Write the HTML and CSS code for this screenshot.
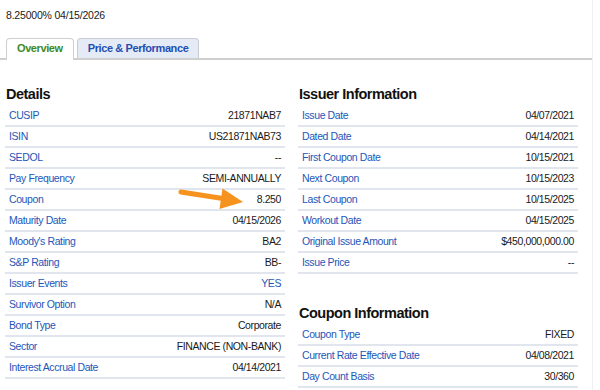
FILE: index.html
```html
<!DOCTYPE html>
<html lang="en">
  <head>
    <meta charset="UTF-8" />
    <title>8.25000% 04/15/2026</title>
    <link rel="stylesheet" href="styles.css">
  </head>
  <body>
    <div class="page">
      <h1 class="title">8.25000% 04/15/2026</h1>

      <div class="tabs">
        <div class="tab tab-active">Overview</div>
        <div class="tab">Price &amp; Performance</div>
      </div>

      <div class="content">
        <section class="col">
          <h2 class="heading">Details</h2>
          <div class="row"><span class="label">CUSIP</span><span class="value">21871NAB7</span></div>
          <div class="row"><span class="label">ISIN</span><span class="value">US21871NAB73</span></div>
          <div class="row"><span class="label">SEDOL</span><span class="value">--</span></div>
          <div class="row"><span class="label">Pay Frequency</span><span class="value">SEMI-ANNUALLY</span></div>
          <div class="row"><span class="label">Coupon</span><span class="value">8.250</span></div>
          <div class="row"><span class="label">Maturity Date</span><span class="value">04/15/2026</span></div>
          <div class="row"><span class="label">Moody's Rating</span><span class="value">BA2</span></div>
          <div class="row"><span class="label">S&amp;P Rating</span><span class="value">BB-</span></div>
          <div class="row"><span class="label">Issuer Events</span><span class="value link">YES</span></div>
          <div class="row"><span class="label">Survivor Option</span><span class="value">N/A</span></div>
          <div class="row"><span class="label">Bond Type</span><span class="value">Corporate</span></div>
          <div class="row"><span class="label">Sector</span><span class="value">FINANCE (NON-BANK)</span></div>
          <div class="row"><span class="label">Interest Accrual Date</span><span class="value">04/14/2021</span></div>
        </section>

        <section class="col">
          <h2 class="heading">Issuer Information</h2>
          <div class="row"><span class="label">Issue Date</span><span class="value">04/07/2021</span></div>
          <div class="row"><span class="label">Dated Date</span><span class="value">04/14/2021</span></div>
          <div class="row"><span class="label">First Coupon Date</span><span class="value">10/15/2021</span></div>
          <div class="row"><span class="label">Next Coupon</span><span class="value">10/15/2023</span></div>
          <div class="row"><span class="label">Last Coupon</span><span class="value">10/15/2025</span></div>
          <div class="row"><span class="label">Workout Date</span><span class="value">04/15/2025</span></div>
          <div class="row"><span class="label">Original Issue Amount</span><span class="value">$450,000,000.00</span></div>
          <div class="row"><span class="label">Issue Price</span><span class="value">--</span></div>

          <h2 class="heading heading-gap">Coupon Information</h2>
          <div class="row"><span class="label">Coupon Type</span><span class="value">FIXED</span></div>
          <div class="row"><span class="label">Current Rate Effective Date</span><span class="value">04/08/2021</span></div>
          <div class="row"><span class="label">Day Count Basis</span><span class="value">30/360</span></div>
        </section>
      </div>

      <svg class="arrow" width="600" height="390" viewBox="0 0 600 390">
        <line x1="181" y1="192" x2="226" y2="199" stroke="#f6921e" stroke-width="5" stroke-linecap="round" />
        <polygon points="222.5,188.5 243,202 219.5,209" fill="#f6921e" />
      </svg>
    </div>
  </body>
</html>
```

FILE: styles.css
```css
* {
  margin: 0;
  padding: 0;
  box-sizing: border-box;
}

body {
  background-color: #ffffff;
  font-family: "Liberation Sans", Arial, Helvetica, sans-serif;
  color: #1a1a1a;
}

.page {
  position: relative;
  width: 593px;
  height: 390px;
  padding-left: 5px;
  border-right: 1px solid #f0f0f0;
}

.title {
  font-size: 10.5px;
  font-weight: normal;
  letter-spacing: -0.2px;
  line-height: 14px;
  padding: 8px 0 0 1px;
  color: #1a1a1a;
}

.tabs {
  display: flex;
  align-items: flex-end;
  gap: 3px;
  margin-top: 16px;
  margin-left: -5px;
  padding-left: 6px;
  border-bottom: 2px solid #cfcfcf;
  height: 22px;
}

.tab {
  height: 20px;
  padding: 0 10px;
  border: 1px solid #c9cdd3;
  border-bottom: none;
  border-radius: 4px 4px 0 0;
  background-color: #e5ebf6;
  color: #1f4fb2;
  font-size: 11px;
  font-weight: bold;
  letter-spacing: -0.4px;
  line-height: 19px;
}

.tab-active {
  height: 22px;
  margin-bottom: -2px;
  background-color: #ffffff;
  color: #3d8a1f;
  border-color: #cfcfcf;
}

.content {
  display: grid;
  grid-template-columns: 280px 280px;
  gap: 13px;
  padding-top: 24px;
}

.heading {
  font-size: 14.5px;
  font-weight: bold;
  letter-spacing: -0.5px;
  line-height: 20px;
  margin-bottom: 2px;
  padding-left: 1px;
  color: #111111;
}

.heading-gap {
  margin-top: 29px;
}

.row {
  display: flex;
  justify-content: space-between;
  height: 21px;
  line-height: 19px;
  padding: 0 4px;
  border-bottom: 2px solid #e1e6ee;
  font-size: 10.5px;
  letter-spacing: -0.4px;
}

.label {
  color: #2456b8;
}

.value {
  color: #1a1a1a;
}

.value.link {
  color: #2456b8;
}

.arrow {
  position: absolute;
  top: 0;
  left: 0;
  pointer-events: none;
}
```
